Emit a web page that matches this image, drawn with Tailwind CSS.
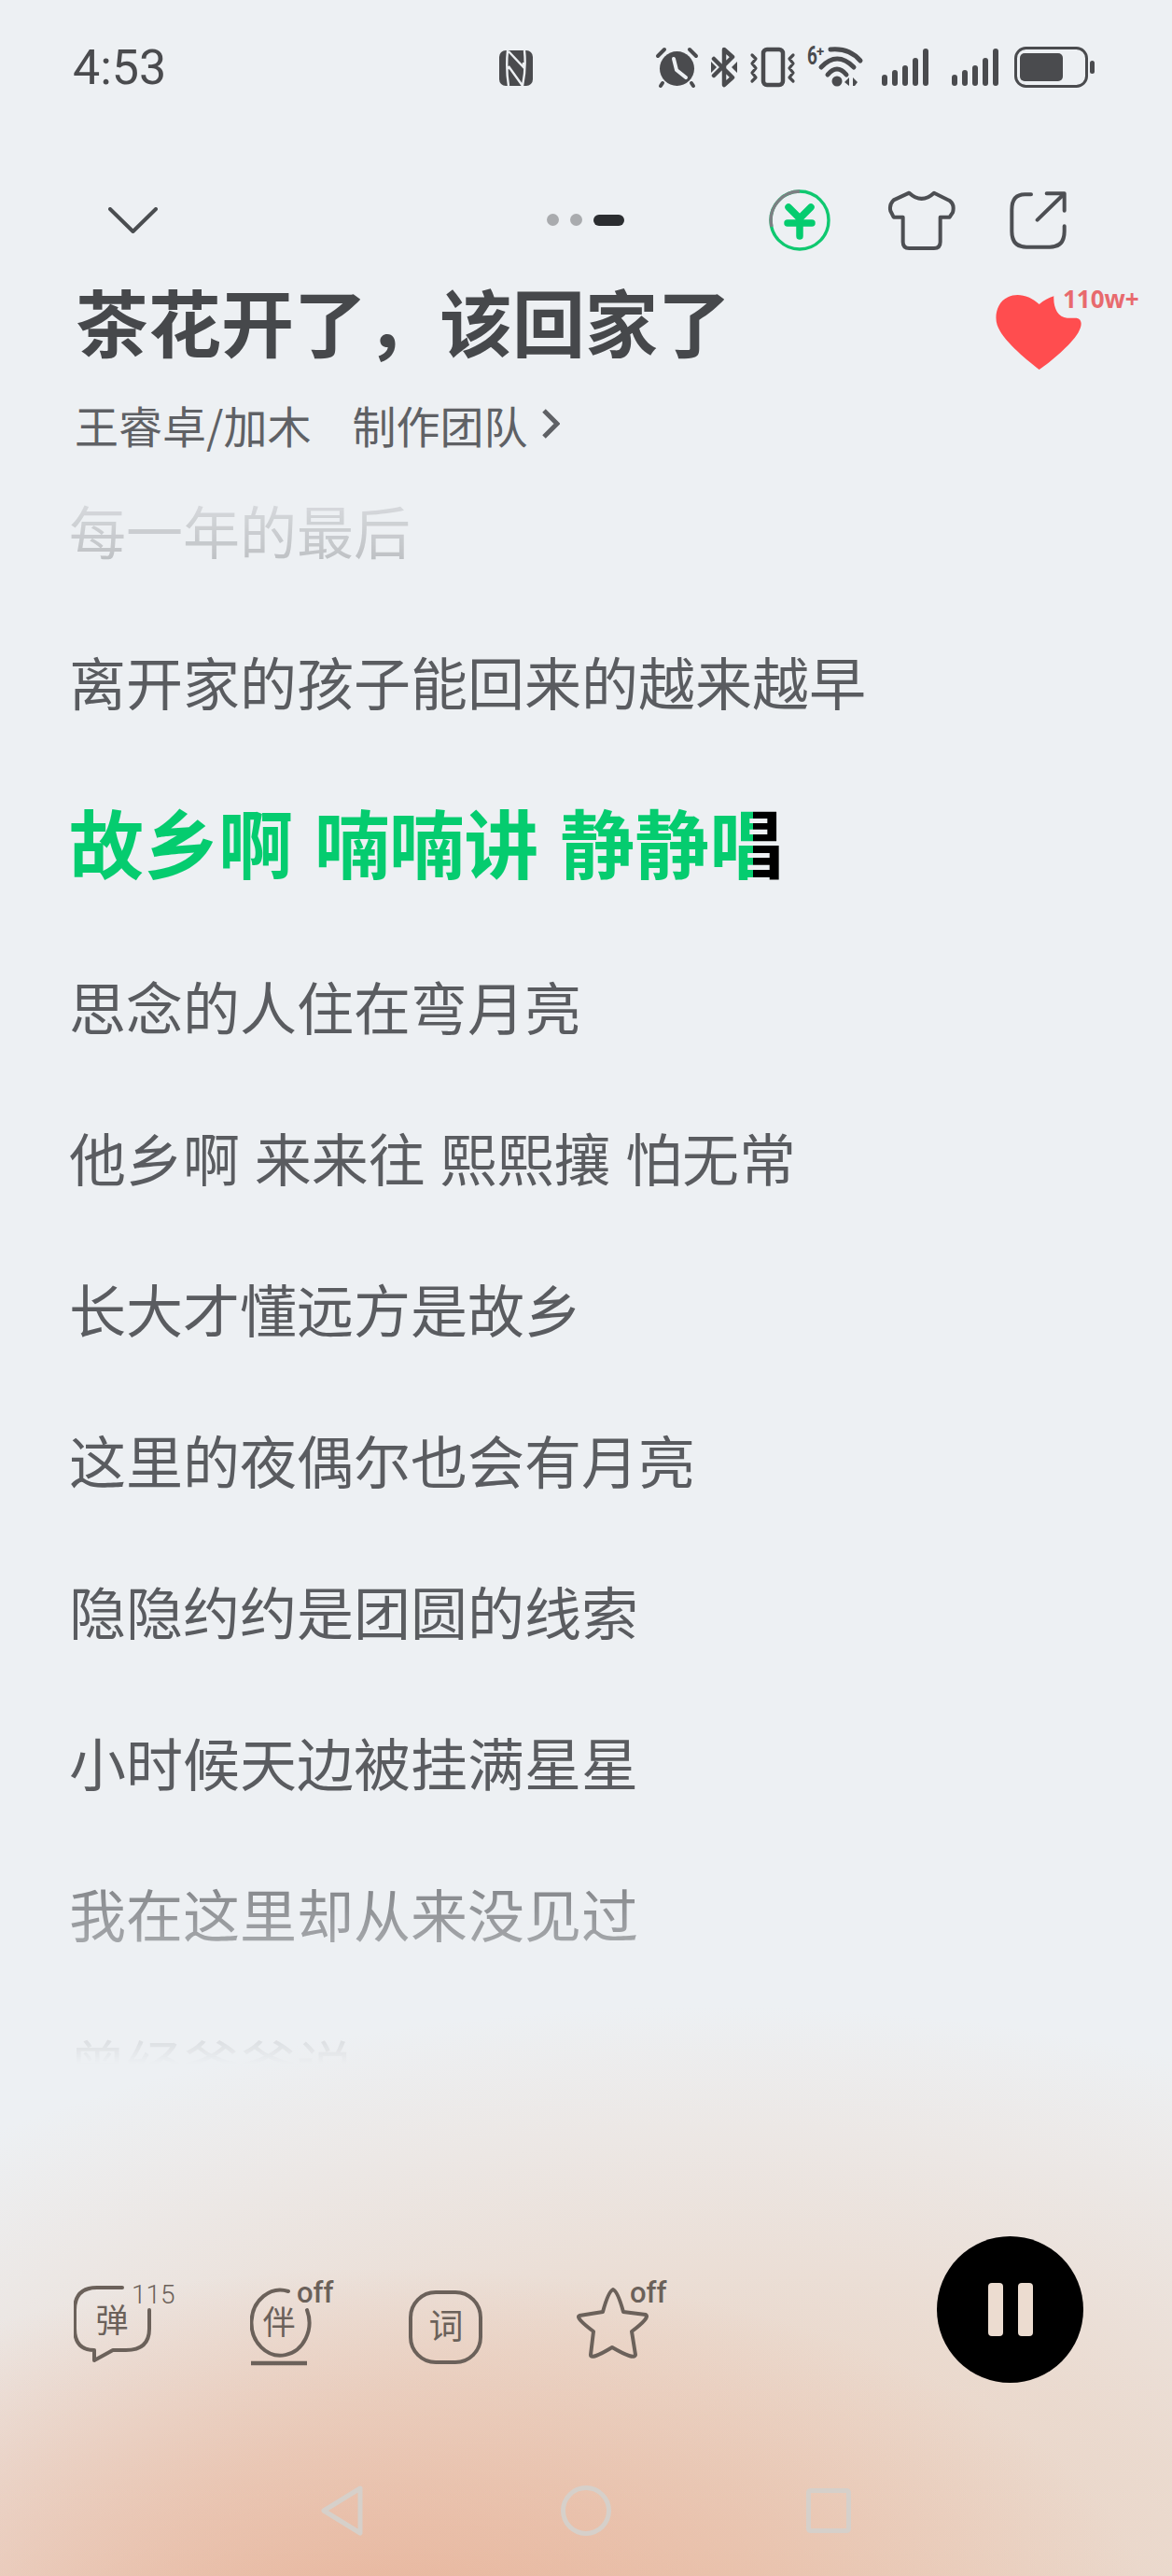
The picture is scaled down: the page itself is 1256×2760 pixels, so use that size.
<!DOCTYPE html>
<html lang="zh">
<head>
    <meta charset="UTF-8">
    <meta name="viewport" content="width=device-width, initial-scale=1.0">
    <title>茶花开了，该回家了</title>
    <script src="https://cdn.jsdelivr.net/npm/@tailwindcss/browser@4"></script>
</head>
<body class="bg-[#edf0f3] font-['Noto_Sans_CJK_SC','Noto_Sans',sans-serif]">
    <div class="flex flex-col w-[1256px] h-[2760px] overflow-hidden bg-[radial-gradient(ellipse_820px_400px_at_420px_2830px,rgba(232,178,152,0.95)_0%,rgba(232,178,152,0)_100%),radial-gradient(ellipse_1250px_640px_at_760px_2790px,rgba(234,208,190,1)_0%,rgba(234,214,200,0.85)_45%,rgba(237,240,243,0)_100%)]">
        <!-- Status bar -->
        <div class="flex items-center h-[146px] pl-[78px] shrink-0">
            <span class="font-['Roboto'] text-[52px] leading-none text-[#4a4b4e] w-[457px]">4:53</span>
            <svg class="w-[36px] h-[38px]" viewBox="0 0 36 38">
                <rect width="36" height="38" rx="7" fill="#4a4b4e"/>
                <path d="M9 0q-2 19 1 38M27 0q2 19-2 38M10 1l16 17v-5M11 20l-1-3 15 21" fill="none" stroke="#edf0f3" stroke-width="2.4"/>
            </svg>
            <svg class="ml-[131px] w-[472px] h-[64px]" viewBox="700 41 472 64" fill="#4a4b4e">
                <!-- alarm -->
                <circle cx="723.5" cy="73.5" r="18.5"/>
                <path d="M720 63l3 12 10 8" fill="none" stroke="#edf0f3" stroke-width="4" stroke-linecap="round" stroke-linejoin="round"/>
                <path d="M703 60l7-7M744 60l-7-7M708 89l-2 3M739 89l2 3" stroke="#4a4b4e" stroke-width="4" stroke-linecap="round"/>
                <!-- bluetooth -->
                <path d="M763 63l20 20-9 8V53l9 8-20 20" fill="none" stroke="#4a4b4e" stroke-width="4.5" stroke-linejoin="round" stroke-linecap="round"/>
                <path d="M760 66l6 6-6 6zM788 66l-6 6 6 6z"/>
                <!-- vibrate -->
                <rect x="816" y="53" width="21" height="38" rx="4" fill="none" stroke="#4a4b4e" stroke-width="4.5"/>
                <path d="M804 59l4 4-4 5 4 5-4 5 4 5-4 4M848 59l-4 4 4 5-4 5 4 5-4 5 4 4" fill="none" stroke="#4a4b4e" stroke-width="3.2" stroke-linecap="round" stroke-linejoin="round"/>
                <!-- wifi -->
                <text transform="translate(863 69) scale(.68 1)" font-family="Roboto" font-weight="700" font-size="28">6</text>
                <text x="873" y="60" font-family="Roboto" font-weight="700" font-size="15">+</text>
                <path d="M888 53q20-2 32 12M878 72q17-18 35 0M885 80q10-12 20 0" fill="none" stroke="#4a4b4e" stroke-width="5" stroke-linecap="round"/>
                <circle cx="895" cy="87" r="5.5"/>
                <path d="M903 88l5-5v9zM912 83l5 5-3 4h-2z"/>
                <!-- signal -->
                <rect x="943" y="80" width="6" height="12" rx="3"/><rect x="954" y="75" width="6" height="17" rx="3"/><rect x="965" y="70" width="6" height="22" rx="3"/><rect x="976" y="62" width="6" height="30" rx="3"/><rect x="987" y="52" width="6" height="40" rx="3"/>
                <rect x="1018" y="80" width="6" height="12" rx="3"/><rect x="1029" y="75" width="6" height="17" rx="3"/><rect x="1040" y="70" width="6" height="22" rx="3"/><rect x="1051" y="62" width="6" height="30" rx="3"/><rect x="1062" y="52" width="6" height="40" rx="3"/>
                <!-- battery -->
                <rect x="1086.5" y="51.5" width="76" height="41" rx="11" fill="none" stroke="#4a4b4e" stroke-width="3"/>
                <rect x="1091" y="57" width="46" height="30" rx="5"/>
                <rect x="1166" y="65" width="5" height="14" rx="2.5"/>
            </svg>
        </div>

        <!-- Top actions -->
        <div class="flex items-center h-[65px] mt-[57px] pl-[116px] shrink-0">
            <svg class="w-[53px] h-[28px]" viewBox="0 0 53 28" fill="none" stroke="#4a4d50" stroke-width="4" stroke-linecap="round" stroke-linejoin="round"><path d="M2 2l24.5 24L51 2"/></svg>
            <div class="flex items-center ml-[417px] gap-[12px]">
                <span class="w-[13px] h-[13px] rounded-full bg-[#a9abae]"></span>
                <span class="w-[13px] h-[13px] rounded-full bg-[#a9abae]"></span>
                <span class="w-[33px] h-[12px] rounded-full bg-[#2b2d30]"></span>
            </div>
            <svg class="ml-[155px] w-[66px] h-[66px]" viewBox="0 0 66 66" fill="none">
                <circle cx="33" cy="33" r="31" stroke="#0fc870" stroke-width="3.4"/>
                <path d="M33 2A31 31 0 0 0 3 40" stroke="#7d7f83" stroke-width="3.4"/>
                <path d="M21 19l12 12 12-12M33 31v19M20 36h26" stroke="#05cc6f" stroke-width="7.5" stroke-linecap="round" stroke-linejoin="round"/>
            </svg>
            <svg class="ml-[61px] w-[76px] h-[66px]" viewBox="455 36 228 198" fill="none" stroke="#4d4f53" stroke-width="12" stroke-linejoin="round">
                <path d="M525 47Q565 84 605 47L655 72Q672 84 665 110L655 125H625V205Q625 225 605 225H525Q505 225 505 205V125H475L465 105Q460 85 475 70Z"/>
            </svg>
            <svg class="ml-[54px] w-[66px] h-[66px]" viewBox="848 40 198 198" fill="none" stroke="#4d4f53" stroke-width="12" stroke-linecap="round" stroke-linejoin="round">
                <path d="M920 56H900Q858 56 858 105V175Q858 225 905 225H980Q1027 225 1027 175V158M940 138L1025 55M970 53H1027V108"/>
            </svg>
        </div>

        <!-- Title -->
        <div class="flex justify-between mt-[42px] pl-[81px] pr-[97px] shrink-0">
            <h1 class="text-[78px] leading-[66px] font-bold text-[#46484b]">茶花开了，该回家了</h1>
            <div class="relative w-[92px] h-[80px] mt-[6px]">
                <svg class="w-[92px] h-[80px]" viewBox="200 108 276 240" fill="#ff4d4f">
                    <path d="M340 138C310 110 270 100 240 115C205 130 195 175 205 205C220 250 290 310 340 348C380 320 440 270 465 230C480 205 478 185 460 182L430 182C400 180 385 150 387 112C370 118 355 125 340 138Z"/>
                </svg>
                <span class="absolute left-[72px] -top-[9px] text-[26px] leading-[26px] font-bold text-[#e86a6e] font-['Noto_Sans']">110w+</span>
            </div>
        </div>

        <!-- Artist -->
        <div class="flex items-center h-[46px] mt-[35px] pl-[80px] text-[47px] leading-none text-[#5f6165] shrink-0">
            <span>王睿卓/加木</span>
            <span class="ml-[44px]">制作团队</span>
            <svg class="ml-[15px] w-[20px] h-[32px]" viewBox="0 0 20 32" fill="none" stroke="#5f6165" stroke-width="5"><path d="M3 2l14 14L3 30"/></svg>
        </div>

        <!-- Lyrics -->
        <div class="flex-1 mt-[10px] pl-[74px] text-[61px] text-[#5a5c60] overflow-hidden [mask-image:linear-gradient(180deg,rgba(0,0,0,0.14)_49px,rgba(0,0,0,0.3)_109px,#000_190px,#000_1470px,rgba(0,0,0,0.75)_1520px,rgba(0,0,0,0.55)_1580px,rgba(0,0,0,0.12)_1697px,rgba(0,0,0,0)_1724px)]">
            <p class="flex items-center h-[162px]">每一年的最后</p>
            <p class="flex items-center h-[162px]">离开家的孩子能回来的越来越早</p>
            <p class="w-fit h-[162px] leading-[162px] mt-[8px] mb-[16px] text-[80px] font-bold [word-spacing:5px] text-transparent bg-clip-text bg-[linear-gradient(90deg,#05cc6f_733px,#000_733px)]">故乡啊 喃喃讲 静静唱</p>
            <p class="flex items-center h-[162px]">思念的人住在弯月亮</p>
            <p class="h-[162px] leading-[162px] [word-spacing:2px]">他乡啊 来来往 熙熙攘 怕无常</p>
            <p class="flex items-center h-[162px]">长大才懂远方是故乡</p>
            <p class="flex items-center h-[162px]">这里的夜偶尔也会有月亮</p>
            <p class="flex items-center h-[162px]">隐隐约约是团圆的线索</p>
            <p class="flex items-center h-[162px]">小时候天边被挂满星星</p>
            <p class="flex items-center h-[162px]">我在这里却从来没见过</p>
            <p class="flex items-center h-[162px]">曾经爸爸说</p>
        </div>

        <!-- Player controls -->
        <div class="flex pl-[79px] shrink-0">
            <div class="flex mt-[29px] h-[110px] text-[#6b615a]">
                <svg class="w-[110px] h-[110px]" viewBox="79 2425 110 110" fill="none" stroke="#6b615a" stroke-width="4" stroke-linejoin="round" stroke-linecap="round">
                    <path d="M131 2451H104Q80 2451 80 2475V2495Q80 2518 101 2518V2529L121 2518H135Q160 2518 160 2495V2475"/>
                    <text x="120" y="2499" text-anchor="middle" font-size="35" fill="#6b615a" stroke="none">弹</text>
                    <text x="141" y="2468" font-family="Roboto" font-weight="300" font-size="28" fill="#6b615a" stroke="none">115</text>
                </svg>
                <svg class="ml-[79px] w-[90px] h-[110px]" viewBox="268 2425 90 110" fill="none" stroke="#6b615a" stroke-width="4" stroke-linecap="round">
                    <path d="M309 2455A31 35 0 1 0 329 2475"/>
                    <path d="M269 2532H329" stroke-width="4.5" stroke-linecap="butt"/>
                    <text x="299" y="2501" text-anchor="middle" font-size="35" fill="#6b615a" stroke="none">伴</text>
                    <text x="318" y="2467" font-family="Roboto" font-weight="500" font-size="31" fill="#6b615a" stroke="none">off</text>
                </svg>
                <svg class="ml-[80px] w-[79px] h-[110px]" viewBox="438 2425 79 110" fill="none" stroke="#6b615a" stroke-width="4">
                    <rect x="440" y="2456" width="75" height="75" rx="27"/>
                    <text x="478" y="2506" text-anchor="middle" font-size="37" fill="#6b615a" stroke="none">词</text>
                </svg>
                <svg class="ml-[101px] w-[97px] h-[110px]" viewBox="618 2425 97 110" fill="none" stroke="#6b615a" stroke-width="4" stroke-linejoin="round">
                    <path d="M657 2453Q662 2455 668 2477L692 2480Q697 2483 677 2498L681 2523Q680 2529 656 2515Q633 2529 633 2523L636 2498Q616 2483 621 2481L646 2477Q652 2455 657 2453Z"/>
                    <text x="675" y="2467" font-family="Roboto" font-weight="500" font-size="31" fill="#6b615a" stroke="none">off</text>
                </svg>
            </div>
            <div class="flex items-center justify-center gap-[16px] ml-[289px] w-[157px] h-[157px] rounded-full bg-black">
                <span class="w-[16px] h-[57px] rounded-[4px] bg-[#ecdcd0]"></span>
                <span class="w-[16px] h-[57px] rounded-[4px] bg-[#ecdcd0]"></span>
            </div>
        </div>

        <!-- Navigation bar -->
        <div class="flex items-center mt-[110px] mb-[43px] pl-[343px] shrink-0">
            <svg class="w-[46px] h-[54px]" viewBox="0 0 46 54" fill="none" stroke="#d6d0ca" stroke-width="5" stroke-linejoin="round"><path d="M43 3L4 27l39 24z"/></svg>
            <svg class="ml-[212px] w-[54px] h-[54px]" viewBox="0 0 54 54" fill="none" stroke="#d6d0ca" stroke-width="5"><circle cx="27" cy="27" r="24.5"/></svg>
            <svg class="ml-[209px] w-[48px] h-[48px]" viewBox="0 0 48 48" fill="none" stroke="#d6d0ca" stroke-width="5"><rect x="2.5" y="2.5" width="43" height="43" rx="2"/></svg>
        </div>
    </div>
</body>
</html>
